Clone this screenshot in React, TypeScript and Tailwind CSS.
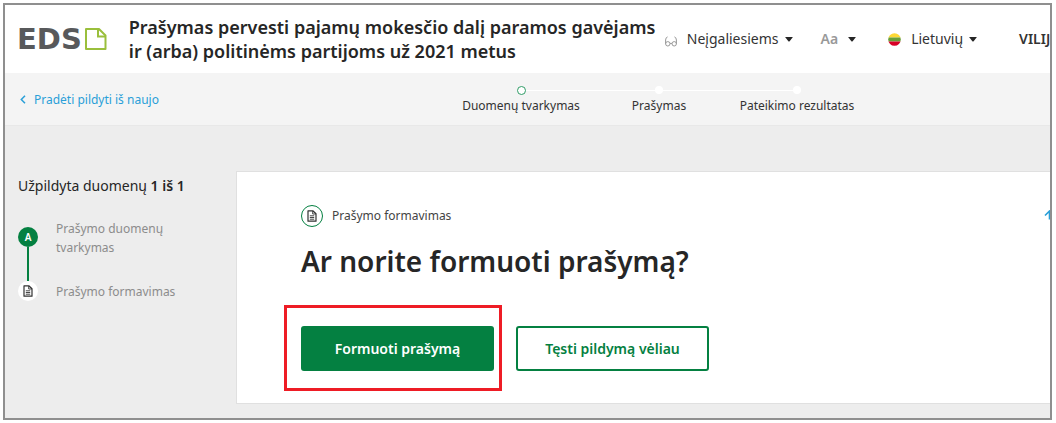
import type { ReactNode } from 'react'
import clsx from 'clsx'

const steps = [
  { label: 'Duomenų tvarkymas', current: true },
  { label: 'Prašymas', current: false },
  { label: 'Pateikimo rezultatas', current: false },
]

function Caret() {
  return (
    <svg width="8" height="5" viewBox="0 0 8 5" className="shrink-0" aria-hidden="true">
      <path d="M.6 0h6.8q.6 0 .2.6L4.4 4.4q-.4.4-.8 0L.4.6Q0 0 .6 0z" fill="#262626" />
    </svg>
  )
}

function DocumentIcon() {
  return (
    <svg width="10" height="12" viewBox="0 0 10 12" fill="none" stroke="#333" aria-hidden="true">
      <path d="M1 .8h4.8L9 3.8v7.4H1z" strokeWidth="1.2" strokeLinejoin="round" />
      <path d="M5.7 1v3H9M2.8 5.8h4.4M2.8 7.5h4.4M2.8 9.2h4.4" strokeWidth=".9" />
    </svg>
  )
}

function Logo() {
  return (
    <a href="#" className="flex shrink-0 items-center text-[#58595b]">
      <span className="font-['DejaVu_Sans'] text-[29px] leading-6 font-bold">EDS</span>
      <svg width="25" height="24" viewBox="0 0 25 24" fill="none" stroke="#9abf3c" strokeWidth="2" aria-hidden="true">
        <path d="M4 2h13l6.5 6.5V22H4z" strokeLinejoin="round" />
        <path d="M16 2v7.5h7.5" />
      </svg>
    </a>
  )
}

function NavButton({ children, className }: { children: ReactNode; className?: string }) {
  return (
    <button type="button" className={clsx('flex shrink-0 items-center gap-1.5 text-sm text-[#333]', className)}>
      {children}
      <Caret />
    </button>
  )
}

function Header() {
  return (
    <header className="flex h-[68px] items-center bg-white pl-3">
      <Logo />
      <h1 className="ml-[22px] w-[536px] shrink-0 text-lg leading-6 font-semibold whitespace-nowrap text-[#262626]">
        Prašymas pervesti pajamų mokesčio dalį paramos gavėjams
        <br />
        ir (arba) politinėms partijoms už 2021 metus
      </h1>
      <NavButton>
        <svg width="12" height="11" viewBox="0 0 12 11" fill="none" stroke="#999" className="mt-1 mr-1" aria-hidden="true">
          <circle cx="2.8" cy="7.8" r="2.2" />
          <circle cx="9.2" cy="7.8" r="2.2" />
          <path d="M.6 7.8V4Q.8 1.2 2.6.9M11.4 7.8V4Q11.2 1.2 9.4.9M5 7.4h2" />
        </svg>
        Neįgaliesiems
      </NavButton>
      <NavButton className="ml-7">
        <span className="mr-1 font-semibold text-[#999]">Aa</span>
      </NavButton>
      <NavButton className="ml-8">
        <svg width="13" height="13" viewBox="0 0 13 13" className="mr-1" aria-hidden="true">
          <clipPath id="flag">
            <circle cx="6.5" cy="6.5" r="6.3" />
          </clipPath>
          <g clipPath="url(#flag)">
            <path d="M0 0h13v4.5H0z" fill="#fdd835" />
            <path d="M0 4.5h13v4H0z" fill="#689f38" />
            <path d="M0 8.5h13V13H0z" fill="#d80027" />
          </g>
        </svg>
        Lietuvių
      </NavButton>
      <span className="ml-[42px] text-sm font-semibold text-[#333]">VILIJ</span>
    </header>
  )
}

function Stepper() {
  return (
    <nav className="flex h-[53px] items-center border-b border-[#e8e8e8] bg-[#f4f4f4] pt-px pl-[15px] text-xs">
      <a href="#" className="flex w-[432px] shrink-0 items-center gap-2 text-[#2a9fd8]">
        <svg width="6" height="9" viewBox="0 0 6 9" fill="none" stroke="currentColor" strokeWidth="1.5" aria-hidden="true">
          <path d="M5 .7 1.3 4.5 5 8.3" />
        </svg>
        Pradėti pildyti iš naujo
      </a>
      <ol className="flex">
        {steps.map((step, i) => (
          <li key={step.label} className="w-[138px] text-center whitespace-nowrap text-[#333]">
            <div className="flex h-[10px] items-center">
              <span className={clsx('h-px flex-1', i > 0 && 'bg-white')} />
              <span
                className={clsx(
                  'rounded-full bg-white',
                  step.current ? 'size-[9px] border border-[#2f9c66]' : 'size-2',
                )}
              />
              <span className={clsx('h-px flex-1', i < steps.length - 1 && 'bg-white')} />
            </div>
            <div className="mt-[3px] leading-4">{step.label}</div>
          </li>
        ))}
      </ol>
    </nav>
  )
}

function Sidebar() {
  return (
    <aside className="w-[218px] shrink-0 text-[#262626]">
      <p className="text-sm leading-[30px]">
        Užpildyta duomenų <b className="font-semibold">1 iš 1</b>
      </p>
      <ol className="mt-[18px] text-xs leading-[19px] text-[#8c8c8c]">
        <li className="flex gap-[18px]">
          <div className="flex w-5 shrink-0 flex-col items-center pt-2">
            <span className="flex size-5 shrink-0 items-center justify-center rounded-full bg-[#048041] text-[10px] leading-none font-semibold text-white">
              A
            </span>
            <span className="w-[2px] flex-1 bg-[#048041]" />
          </div>
          <span className="w-[120px] pb-6">Prašymo duomenų tvarkymas</span>
        </li>
        <li className="flex items-center gap-[18px]">
          <span className="flex size-5 items-center justify-center rounded-full bg-white">
            <DocumentIcon />
          </span>
          Prašymo formavimas
        </li>
      </ol>
    </aside>
  )
}

function FormCard() {
  return (
    <section className="relative flex-1 border border-r-0 border-[#e0e0e0] bg-white pt-[33px] pb-8 pl-16">
      <div className="flex items-center gap-[9px] text-xs text-[#444]">
        <span className="flex size-[22px] items-center justify-center rounded-full border border-[#048041]">
          <DocumentIcon />
        </span>
        Prašymo formavimas
      </div>
      <h2 className="mt-[14px] text-[28px] leading-10 font-semibold text-[#262626]">Ar norite formuoti prašymą?</h2>
      <div className="mt-[45px] flex gap-[22px] text-sm font-semibold">
        <div className="relative">
          <button type="button" className="h-[45px] w-[193px] rounded-[3px] bg-[#048041] text-white">
            Formuoti prašymą
          </button>
          <span className="pointer-events-none absolute -top-[21px] -right-2 -bottom-5 -left-[17px] border-3 border-[#ee1c25]" />
        </div>
        <button
          type="button"
          className="h-[45px] w-[193px] rounded-[3px] border-2 border-[#048041] bg-white text-[#048041]"
        >
          Tęsti pildymą vėliau
        </button>
      </div>
      <a href="#" aria-label="Į viršų" className="absolute top-[38px] -right-[5px] text-[#2a9fd8]">
        <svg width="11" height="10" viewBox="0 0 11 10" fill="none" stroke="currentColor" strokeWidth="1.6" aria-hidden="true">
          <path d="M1 5.5 5.5 1 10 5.5M5.5 1v8.5" />
        </svg>
      </a>
    </section>
  )
}

export default function App() {
  return (
    <div className="bg-white pt-[3px] pr-1 pb-1 pl-[3px] font-['Noto_Sans',sans-serif]">
      <div className="overflow-hidden border-2 border-[#8f8f8f] bg-[#ededed]">
        <Header />
        <Stepper />
        <main className="flex pt-[45px] pb-[14px] pl-[13px]">
          <Sidebar />
          <FormCard />
        </main>
      </div>
    </div>
  )
}
